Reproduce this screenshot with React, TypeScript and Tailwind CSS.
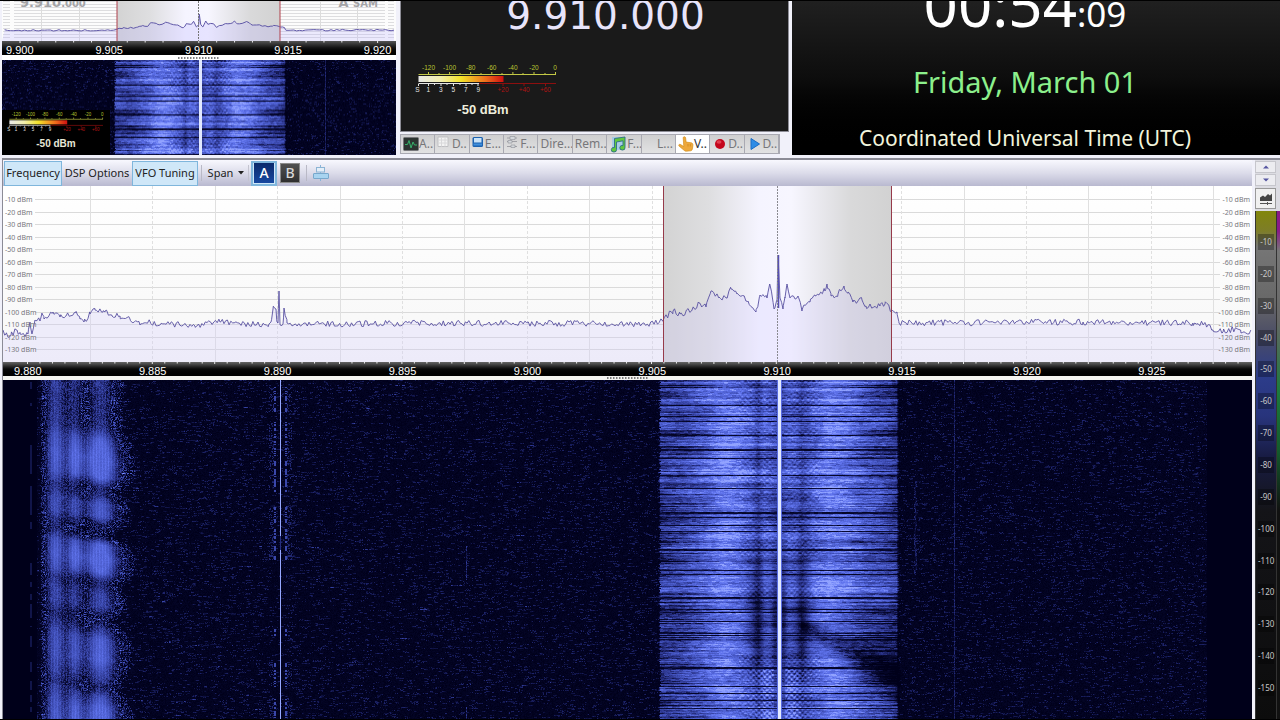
import { useEffect, useRef } from "react";
import type { ReactNode } from "react";
import clsx from "clsx";

/* ---------- deterministic noise ---------- */

function hash(x: number, y: number, seed = 0): number {
  let h = (x * 374761393 + y * 668265263 + seed * 2147483629) | 0;
  h = Math.imul(h ^ (h >>> 13), 1274126177);
  h = Math.imul(h ^ (h >>> 16), 2246822519);
  return ((h ^ (h >>> 15)) >>> 0) / 4294967296;
}

function smooth(x: number, seed: number): number {
  const i = Math.floor(x);
  const f = x - i;
  const t = f * f * (3 - 2 * f);
  return hash(i, 7, seed) * (1 - t) + hash(i + 1, 7, seed) * t;
}

function smooth2(x: number, y: number, seed: number): number {
  const i = Math.floor(x);
  const j = Math.floor(y);
  const u = x - i;
  const v = y - j;
  const a = hash(i, j, seed) * (1 - u) + hash(i + 1, j, seed) * u;
  const b = hash(i, j + 1, seed) * (1 - u) + hash(i + 1, j + 1, seed) * u;
  return a * (1 - v) + b * v;
}

const gauss = (d: number, w: number) => Math.exp(-(d * d) / (w * w));

function curve(points: number[][], x: number): number {
  if (x <= points[0][0]) return points[0][1];
  for (let i = 1; i < points.length; i++) {
    if (x <= points[i][0]) {
      const [x0, y0] = points[i - 1];
      const [x1, y1] = points[i];
      return y0 + ((y1 - y0) * (x - x0)) / (x1 - x0);
    }
  }
  return points[points.length - 1][1];
}

/* ---------- spectrum trace ---------- */

const TRACE: number[][] = [
  [0, 144], [3, 148], [8, 149], [14, 144], [17, 148], [25, 148], [27, 136], [29, 148], [32, 134], [37, 135],
  [39, 127], [41, 133], [50, 126], [57, 131], [63, 130], [72, 127], [77, 133], [81, 136], [87, 128], [92, 124],
  [100, 126], [103, 124], [109, 130], [117, 130], [127, 133], [137, 139], [145, 136], [157, 139], [167, 138],
  [192, 140], [217, 136], [237, 138], [266, 138], [268, 136], [270, 123], [273, 123], [274, 136], [275, 137],
  [276, 105], [277, 138], [280, 138], [281, 122], [284, 137], [300, 138], [450, 137], [651, 138], [659, 134],
  [670, 125], [677, 128], [689, 124], [696, 117], [703, 121], [708, 105], [716, 111], [723, 112], [728, 103],
  [734, 108], [745, 115], [753, 126], [757, 109], [764, 112], [767, 99], [771, 123], [774, 114], [775, 69],
  [777, 112], [780, 123], [782, 111], [784, 98], [787, 112], [795, 110], [799, 125], [802, 119], [807, 116],
  [812, 109], [822, 105], [824, 98], [828, 110], [835, 108], [841, 100], [845, 106], [850, 116], [859, 114],
  [863, 120], [877, 120], [882, 118], [889, 124], [894, 126], [896, 137], [1080, 136], [1190, 137],
  [1203, 139], [1210, 144], [1220, 146], [1230, 143], [1238, 147], [1249, 147],
];

function tracePath(from: number, to: number, step: number, mapX: (x: number) => number, mapY: (y: number) => number) {
  const keys = TRACE.map((p) => p[0]);
  const xs: number[] = [];
  for (let x = from; x <= to; x += step) xs.push(x);
  keys.forEach((k) => k > from && k < to && xs.push(k));
  xs.sort((a, b) => a - b);
  return xs
    .map((x) => {
      const noise = keys.includes(x) ? 0 : (hash(Math.round(x * 3), 5) - 0.5) * 6;
      return `${mapX(x).toFixed(1)} ${mapY(curve(TRACE, x) + noise).toFixed(1)}`;
    })
    .join("L");
}

/* ---------- waterfall ---------- */

const PASS: number[][] = [
  [657, 0], [660, 0.46], [680, 0.54], [700, 0.68], [722, 0.82], [740, 0.76], [752, 0.64], [758, 0.5], [764, 0.68],
  [772, 0.6], [779, 0.5], [788, 0.66], [796, 0.64], [801, 0.5], [812, 0.68], [828, 0.82], [848, 0.78], [864, 0.64],
  [885, 0.54], [896, 0.46], [899, 0],
];
const DARK_ROWS = [
  25, 36, 41, 55, 69, 70, 78, 95, 108, 132, 133, 137, 145, 151, 169, 170, 190, 194, 217, 218, 229, 232, 241, 253, 255, 287, 288, 306,
  313, 320, 328,
];
const BLOBS: number[][] = [
  [0, 0.5], [20, 0.46], [42, 0.46], [55, 0.78], [75, 0.95], [92, 0.86], [104, 0.4], [110, 0.45], [120, 0.72], [132, 0.72],
  [144, 0.22], [150, 0.2], [160, 0.8], [175, 0.95], [188, 0.8], [198, 0.4], [210, 0.6], [222, 0.6], [234, 0.22],
  [244, 0.5], [255, 0.76], [275, 0.8], [292, 0.6], [303, 0.38], [312, 0.66], [325, 0.85], [340, 0.9],
];
const RAMP: number[][] = [
  [0, 0, 0, 26], [0.2, 8, 10, 50], [0.4, 38, 46, 128], [0.6, 66, 82, 188], [0.8, 96, 116, 238], [0.95, 140, 158, 255], [1.1, 225, 232, 255],
];

function level(x: number, y: number): number {
  const streak = hash(Math.floor((x + hash(1, y) * 5) / 4), y, 3);
  const fine = hash(Math.floor(x), y, 4);

  if (x > 776.6 && x < 781.6) return x > 777.6 && x < 780.6 ? 1.1 : 0.75;

  const edge = (hash(3, y, 9) - 0.5) * 3;
  if (x > 659 + edge && x < 899 + edge) {
    let v = curve(PASS, x);
    const side = Math.abs(x - 779);
    v += (smooth(y / 2.2, 11) - 0.5) * 0.2 + (hash(2, y, 12) - 0.5) * 0.2;
    v += (streak - 0.5) * 0.22 + (fine - 0.5) * 0.08;
    v += (smooth2(x / 22, y / 7, 14) - 0.5) * 0.26;
    if (side > 50 && hash(5, y, 13) > 0.78) v -= 0.22 * Math.min(1, (side - 50) / 30);
    if (Math.abs(x - 724) < 2) v = Math.max(v, 0.7);
    const dim = gauss(y - 235, 55);
    v -= dim * (gauss(side - 22, 9) * 0.3 + gauss(side - 4, 4) * 0.3) * (0.6 + streak * 0.6);
    if (side < 42 && side > 5) {
      const ripple = Math.sin(side * 1.15) * Math.sin(y * 1.2 + Math.floor(side / 8));
      v += ripple * 0.13 * smooth(y / 9, 20);
      if (y > 288) v += gauss(side - 12, 18) * (0.1 + ripple * 0.2);
    }
    if (x > 800) {
      const mid = 244 + (x - 800) * 0.5;
      const width = 5 + (x - 800) * 0.2;
      v -= gauss(y - mid, width) * (0.2 + Math.min(0.24, (x - 800) * 0.006));
    }
    v = Math.min(v, 0.96);
    if (DARK_ROWS.includes(y)) v = Math.min(v, 0.06 + streak * 0.22);
    return Math.max(0, v);
  }

  let v = 0;
  if (x > 32 && x < 150) {
    const lag = y - (x - 70) * 0.14;
    const b = curve(BLOBS, lag);
    const columns =
      gauss(x - 55, 11) * 0.7 * (0.4 + b * 0.6) +
      gauss(x - 74, 8) * 0.6 * (0.2 + b * 0.8) +
      gauss(x - 100, 9 + b * 12) * 0.9 * b;
    v = Math.min(0.72, columns);
    if (x < 41) v *= 0.25;
    const grain = 0.08 + Math.max(0, 0.62 - v) * 0.8;
    v += v > 0.04 ? (fine - 0.5) * grain + (Math.floor(x) % 3 === 0 ? 0.05 : -0.02) : 0;
    v = Math.max(0, v);
    if (columns > 0.25) return v;
  }

  const side = Math.abs(x - 280);
  if (side < 0.9) return y > 155 && y < 170 ? 0.4 : 0.97;
  const burst = smooth(y / 12, 31) > 0.36;
  if (burst && side >= 4.5 && side < 6.6) return Math.max(v, hash(9, y, 6) > 0.45 ? 0.54 : 0.1);
  if (burst && side > 6.6 && side < 12 && hash(Math.floor(side), y, 7) > 0.82) return 0.36;
  if (Math.abs(x - 954) < 0.8) return 0.22 + fine * 0.2;
  if (Math.abs(x - 466) < 1 && ((y > 165 && y < 200) || y > 326)) return 0.2 + fine * 0.3;
  if (Math.abs(x - 914 - smooth(y / 6, 40) * 2) < 1 && y > 100 && y < 195) return 0.1 + fine * 0.3;
  if (Math.abs(x - 30.5) < 0.7 && smooth(y / 6, 41) > 0.6) return 0.26;

  if (x > 36 && x < 1207) {
    if (streak < 0.2 && fine > 0.3) v += 0.12 + hash(Math.floor(x), y, 8) * 0.15;
    if (x < 560) {
      const dash = hash(Math.floor(x / 11), y, 17);
      const reach = x < 240 ? 0.978 : 0.99;
      if (dash > reach && fine > 0.3) v += 0.18;
    }
    v += fine * 0.1;
  }
  return v;
}

function Waterfall({ width, height, mapX, className, label }: {
  width: number;
  height: number;
  mapX: (x: number) => number;
  className: string;
  label: string;
}) {
  const ref = useRef<HTMLCanvasElement>(null);
  useEffect(() => {
    const ctx = ref.current?.getContext("2d");
    if (!ctx) return;
    const image = ctx.createImageData(width, height);
    for (let y = 0; y < height; y++) {
      for (let x = 0; x < width; x++) {
        const v = Math.min(1.1, level(mapX(x), y));
        let k = 1;
        while (k < RAMP.length - 1 && v > RAMP[k][0]) k++;
        const a = RAMP[k - 1];
        const b = RAMP[k];
        const t = (v - a[0]) / (b[0] - a[0]);
        const o = (y * width + x) * 4;
        image.data[o] = a[1] + (b[1] - a[1]) * t;
        image.data[o + 1] = a[2] + (b[2] - a[2]) * t;
        image.data[o + 2] = a[3] + (b[3] - a[3]) * t;
        image.data[o + 3] = 255;
      }
    }
    ctx.putImageData(image, 0, 0);
  }, [width, height, mapX]);
  return <canvas ref={ref} width={width} height={height} className={className} role="img" aria-label={label} />;
}

const mainScale = (x: number) => x + 3;
const zoomScale = (x: number) => 779 + (x - 198) * 1.397;

/* ---------- signal meter ---------- */

const UPPER = ["-120", "-100", "-80", "-60", "-40", "-20", "0"];
const LOWER = ["S", "1", "3", "5", "7", "9"];
const OVER = ["+20", "+40", "+60"];

function Meter({ id, className }: { id: string; className: string }) {
  return (
    <svg viewBox="0 0 144 31" className={className} role="img" aria-label="Signal strength">
      <defs>
        <linearGradient id={id}>
          <stop offset="0" stopColor="#e8e8e8" />
          <stop offset="0.25" stopColor="#f1eeb0" />
          <stop offset="0.5" stopColor="#f3e22a" />
          <stop offset="0.8" stopColor="#ef6a1c" />
          <stop offset="1" stopColor="#d01010" />
        </linearGradient>
      </defs>
      <g fontFamily="Liberation Sans, sans-serif" fontSize="6.500" textAnchor="middle">
        {UPPER.map((t, i) => (
          <text key={t} x={13.5 + i * 21.1} y={6.5} fill="#b9c432">{t}</text>
        ))}
        {LOWER.map((t, i) => (
          <text key={t} x={i === 0 ? 2.5 : 0.7 + i * 12.5} y={28.5} fill="#e6e6e6">{t}</text>
        ))}
        {OVER.map((t, i) => (
          <text key={t} x={88 + i * 21.2} y={28.5} fill="#b01414">{t}</text>
        ))}
      </g>
      <path
        d="M3.500 11.500H141M13.500 9v2M34.600 9v2M55.700 9v2M76.800 9v2M97.900 9v2M119 9v2M140.500 9v2M24 10v1M45 10v1M66 10v1M87 10v1M108 10v1M130 10v1"
        stroke="#c3c845"
        fill="none"
      />
      <rect x="3.500" y="13" width="85" height="6" fill={`url(#${id})`} />
      <path d="M3.500 20.500H64M3.500 21v2M13.500 21v2M19.500 21v1M26 21v2M32 21v1M38.500 21v2M45 21v1M51 21v2M57 21v1M63 21v2" stroke="#e6e6e6" fill="none" />
      <path d="M64 20.500H141M88 21v2M109 21v2M130.500 21v2" stroke="#8d0f0f" fill="none" />
    </svg>
  );
}

/* ---------- charts ---------- */

const LEVELS = Array.from({ length: 13 }, (_, i) => -10 * (i + 1));
const MAIN_TRACE = tracePath(0, 1249, 1.7, (x) => x, (y) => y);
const ZOOM_TRACE = tracePath(503, 1050, 4, (x) => 198 + (x + 3 - 779) / 1.397, (y) => y * 0.235 - 3);

function BandGradient({ id }: { id: string }) {
  return (
    <linearGradient id={id}>
      <stop offset="0" stopColor="#d3d3d3" />
      <stop offset="0.2" stopColor="#dedee0" />
      <stop offset="0.42" stopColor="#f5f4ff" />
      <stop offset="0.56" stopColor="#f7f6ff" />
      <stop offset="0.82" stopColor="#d9d9da" />
      <stop offset="1" stopColor="#d2d2d2" />
    </linearGradient>
  );
}

function MainChart() {
  return (
    <svg viewBox="0 0 1249 176" preserveAspectRatio="none" className="block h-full w-full" role="img" aria-label="RF spectrum">
      <defs>
        <BandGradient id="band-main" />
        <linearGradient id="paper" x2="0" y2="1">
          <stop offset="0" stopColor="#ffffff" />
          <stop offset="1" stopColor="#f7f7f7" />
        </linearGradient>
      </defs>
      <rect width="1249" height="176" fill="url(#paper)" />
      {LEVELS.map((l, i) => (
        <path key={l} d={`M32 ${Math.round(13 + i * 12.53) + 0.5}H1217`} stroke="#dadada" />
      ))}
      {Array.from({ length: 19 }, (_, i) => (
        <path
          key={i}
          d={`M${Math.round(87 + i * 62.4) + 0.5} 0V176`}
          stroke="#e0e0e0"
          strokeDasharray={i % 2 ? "3 2" : undefined}
        />
      ))}
      <rect x="660" y="0" width="229" height="176" fill="url(#band-main)" />
      <path d={`M${MAIN_TRACE}V176H0Z`} fill="#cfc8ff" fillOpacity="0.26" />
      <path d={`M${MAIN_TRACE}`} fill="none" stroke="#5850a0" strokeWidth="0.900" />
      <path d="M775.500 69V122" stroke="#5850b0" strokeWidth="1.500" />
      <path d="M660.500 0V176M888.500 0V176" stroke="#963a4a" />
      <path d="M774.500 0V176" stroke="#8a8a90" strokeDasharray="2 1" />
    </svg>
  );
}

function ZoomChart() {
  return (
    <svg viewBox="0 0 394 40" preserveAspectRatio="none" className="block h-full w-full" role="img" aria-label="Zoomed spectrum">
      <defs>
        <BandGradient id="band-zoom" />
      </defs>
      <rect width="394" height="40" fill="#fcfcfc" />
      {Array.from({ length: 13 }, (_, i) => (
        <path key={i} d={`M12 ${i * 3 + 0.5}H383M1 ${i * 3 + 0.5}h7M386 ${i * 3 + 0.5}h6`} stroke="#dddddf" />
      ))}
      <path d="M39.500 0V40M77.500 0V40M318.500 0V40M355.500 0V40" stroke="#dcdcdc" />
      <rect x="115" y="0" width="163" height="40" fill="url(#band-zoom)" />
      <path d={`M${ZOOM_TRACE}V40H0Z`} fill="#b9b0ff" fillOpacity="0.25" />
      <path d={`M${ZOOM_TRACE}`} fill="none" stroke="#6058a8" />
      <path d="M115 0V40M278 0V40" stroke="#b0404c" />
      <path d="M196.500 0V40" stroke="#777" strokeDasharray="2 1" />
    </svg>
  );
}

function Ticks({ start, step, count, width }: { start: number; step: number; count: number; width: number }) {
  return (
    <svg viewBox={`0 0 ${width} 3`} preserveAspectRatio="none" className="absolute inset-x-0 top-0 h-[3px] w-full" aria-hidden="true">
      {Array.from({ length: count }, (_, i) => (
        <path key={i} d={`M${start + i * step} 0v${i % 5 ? 1.5 : 2}`} stroke="#e8e8e8" />
      ))}
    </svg>
  );
}

function LevelLabels({ side }: { side: "left" | "right" }) {
  return (
    <div
      className={clsx(
        "absolute inset-y-0 flex flex-col justify-between pt-[8px] pb-[6px] font-['Noto_Sans',sans-serif] text-[7px] leading-[12px] text-[#77777c]",
        side === "left" ? "left-[2px]" : "right-[2px] text-right",
      )}
    >
      {LEVELS.map((l) => (
        <span key={l}>{l} dBm</span>
      ))}
    </div>
  );
}

const Grip = () => (
  <svg viewBox="0 0 42 2" className="h-[2px] w-[42px]" aria-hidden="true">
    <path d="M0 1H42" stroke="#555" strokeWidth="1.500" strokeDasharray="1.500 1.500" />
  </svg>
);

/* ---------- tab icons ---------- */

const ScopeIcon = () => (
  <svg viewBox="0 0 16 16" className="size-4 shrink-0" aria-hidden="true">
    <rect x="0.500" y="1.500" width="15" height="13" rx="1" fill="#2c3431" stroke="#77777b" />
    <path d="M2 8.500h2.500l1.500-4 2 7.500 2-6 1.500 3H14" fill="none" stroke="#37b06a" />
  </svg>
);
const GridIcon = () => (
  <svg viewBox="0 0 12 12" className="mb-1 size-3 shrink-0" aria-hidden="true">
    <path d="M1 1h10v9.500H1z" fill="#f3f3f3" stroke="#bfbfc2" />
    <path d="M1 4h10M1 7h10M4.500 1v9.500M8 1v9.500" stroke="#d8d8da" />
  </svg>
);
const WindowIcon = () => (
  <svg viewBox="0 0 12 12" className="mb-1 size-3 shrink-0" aria-hidden="true">
    <rect x="0.500" y="1" width="10.500" height="10" rx="1.500" fill="#1c62b0" />
    <rect x="2" y="2" width="7.500" height="4.500" fill="#c8e2f8" />
    <path d="M1.500 8.500H10" stroke="#3f8fdc" strokeWidth="2" />
  </svg>
);
const FilterIcon = () => (
  <svg viewBox="0 0 12 12" className="mb-1 size-3 shrink-0" aria-hidden="true">
    <path d="M1 2h10M1 5.500h10M1 10.500h10" stroke="#a0a0a6" />
    <path d="M4 .5h5v3H4zM2 4.500h4v2.500H2zM5 9h4v2.500H5z" fill="#d4d8dc" stroke="#8d9198" strokeWidth="0.600" />
  </svg>
);
const MusicIcon = () => (
  <svg viewBox="0 0 18 17" className="h-[17px] w-[18px] shrink-0" aria-hidden="true">
    <rect x="3" y="1" width="12" height="13" fill="#9cc8ea" opacity="0.800" />
    <path d="M5.500 2.500 16 1v10.500a2.600 2.300 0 1 1-2-2V4.800L7.500 6v7.500a2.600 2.300 0 1 1-2-2z" fill="#62c83e" stroke="#2b6e86" strokeWidth="0.900" />
  </svg>
);
const HandIcon = () => (
  <svg viewBox="0 0 16 16" className="size-4 shrink-0" aria-hidden="true">
    <path
      d="M5.200 1.800c0-1.400 2.200-1.400 2.400 0l.5 4.300 4.800.6c1.500.3 2.100 1.100 2 2.600l-.5 3.600c-.2 1-.8 1.700-1.800 1.900l-4.200.4c-1 .1-1.700-.2-2.300-.9L1 10c-.8-1.200.5-2.200 1.600-1.400l3.200 2z"
      fill="#eda83c"
      stroke="#d68f1c"
      strokeWidth="0.700"
    />
    <path d="M10 8v2.500M12.300 8v2.500" stroke="#c98317" strokeWidth="0.700" />
  </svg>
);
const RecordIcon = () => (
  <svg viewBox="0 0 16 16" className="size-4 shrink-0" aria-hidden="true">
    <circle cx="8" cy="8" r="5" fill="#c4061c" />
    <ellipse cx="7" cy="6" rx="2.500" ry="1.700" fill="#ee5a66" opacity="0.700" />
  </svg>
);
const PlayIcon = () => (
  <svg viewBox="0 0 16 16" className="size-4 shrink-0" aria-hidden="true">
    <path d="M4 2.500v11L12.500 8z" fill="#2e8ce6" stroke="#1a6cc4" />
  </svg>
);

const TABS: { text: string; icon?: ReactNode; active?: boolean; end?: boolean }[] = [
  { text: "A..", icon: <ScopeIcon /> },
  { text: "D..", icon: <GridIcon />, end: true },
  { text: "E...", icon: <WindowIcon />, end: true },
  { text: "F...", icon: <FilterIcon />, end: true },
  { text: "Dire..." },
  { text: "Rem..." },
  { text: "F...", icon: <MusicIcon /> },
  { text: "L...", end: true },
  { text: "V..", icon: <HandIcon />, active: true },
  { text: "D..", icon: <RecordIcon />, end: true },
  { text: "D..", icon: <PlayIcon />, end: true },
];

/* ---------- panels ---------- */

function ZoomPanel() {
  return (
    <section className="flex w-[394px] shrink-0 flex-col">
      <div className="relative h-10 overflow-hidden">
        <ZoomChart />
        <div className="absolute inset-x-[18px] -top-[6px] flex justify-between font-['DejaVu_Sans',sans-serif] leading-4 font-bold text-[#a3a3a6]">
          <p className="text-[13px]">
            9.910<span className="text-[10px]">.000</span>
          </p>
          <p className="text-[13px]">
            A <span className="text-[10px]">SAM</span>
          </p>
        </div>
      </div>
      <div className="relative flex h-[14px] overflow-hidden bg-gradient-to-b from-[#555] via-[#111] to-black pt-[3px] font-['Liberation_Sans',sans-serif] text-[11px] leading-[12px] text-white">
        <Ticks start={18} step={17.88} count={21} width={394} />
        {["9.900", "9.905", "9.910", "9.915", "9.920"].map((f) => (
          <span key={f} className="w-[22.7%] shrink-0 pl-[4px]">{f}</span>
        ))}
      </div>
      <div className="flex h-[5px] items-center justify-center bg-white">
        <Grip />
      </div>
      <div className="relative min-h-0 flex-1">
        <Waterfall width={394} height={96} mapX={zoomScale} className="block h-full w-full" label="Zoomed waterfall" />
        <div className="absolute bottom-0 left-0 flex w-[108px] flex-col items-center bg-black pt-px pb-1">
          <Meter id="meter-small" className="h-[22px] w-[98px]" />
          <p className="mt-1 font-['Liberation_Sans',sans-serif] text-[10px] leading-[14px] font-bold text-[#e8e8d8]">-50 dBm</p>
        </div>
      </div>
    </section>
  );
}

function VfoPanel() {
  return (
    <section className="flex w-[389px] shrink-0 flex-col">
      <div className="flex h-[131px] flex-col justify-end border-x border-b border-[#8d8d96] bg-[#1a1a1a]">
        <p className="pl-[22px] text-center font-['DejaVu_Sans',sans-serif] text-[39px] leading-[46px] text-[#e8e4fa]">9.910.000</p>
        <div className="mt-6 ml-[14px] flex w-[144px] flex-col items-center">
          <Meter id="meter-large" className="h-[31px] w-[144px]" />
          <p className="mt-2 mr-2 mb-[13px] font-['Liberation_Sans',sans-serif] text-[13px] leading-4 font-bold text-[#eeeedd]">-50 dBm</p>
        </div>
      </div>
      <div className="mt-[2px] flex h-[20px] w-[380px] border border-[#a9a9b2]" role="tablist">
        {TABS.map((t, i) => (
          <button
            key={i}
            type="button"
            role="tab"
            aria-selected={!!t.active}
            className={clsx(
              "flex min-w-0 flex-1 items-center overflow-hidden border-r border-[#a9a9b2] px-[2px] font-['Noto_Sans',sans-serif] text-[12px] leading-4 whitespace-nowrap",
              t.active ? "bg-white text-[#333]" : "bg-gradient-to-b from-[#cfcfd0] to-[#e2e2e3] text-[#77777a]",
              t.icon && t.end ? "justify-between" : t.end ? "justify-end" : "justify-start",
            )}
          >
            {t.icon}
            <span>{t.text}</span>
          </button>
        ))}
      </div>
    </section>
  );
}

function ClockPanel() {
  return (
    <section className="flex min-w-0 flex-1 flex-col items-center justify-end overflow-hidden bg-gradient-to-b from-[#202020] via-[#0d0d0d] to-black pr-[22px] font-['Noto_Sans',sans-serif] whitespace-nowrap">
      <p className="text-[60px] leading-[60px] text-white">
        00:54<span className="text-[35px]">:09</span>
      </p>
      <p className="mt-5 text-[29px] leading-9 text-[#8cf08c]">Friday, March 01</p>
      <p className="mt-6 mb-[3px] text-[21px] leading-7 text-[#f2f4dc]">Coordinated Universal Time (UTC)</p>
    </section>
  );
}

const TOOL = "flex h-[25px] items-center justify-center border text-[11px] whitespace-nowrap text-[#222]";
const ON = "border-[#7fb6dc] bg-[#cfe7f8]";
const Divider = () => <span className="mx-[3px] h-4 w-px bg-[#b9b9c6]" />;

function Toolbar() {
  return (
    <div
      role="toolbar"
      className="flex h-[26px] shrink-0 items-center bg-gradient-to-b from-[#f8f8fe] via-[#dcdcea] to-[#b9b9d0] pl-px font-['Noto_Sans',sans-serif]"
    >
      <button type="button" className={clsx(TOOL, ON, "w-[58px]")}>Frequency</button>
      <button type="button" className={clsx(TOOL, "w-[70px] border-transparent")}>DSP Options</button>
      <button type="button" className={clsx(TOOL, ON, "w-[66px]")}>VFO Tuning</button>
      <Divider />
      <button type="button" className={clsx(TOOL, "w-[42px] gap-[5px] border-transparent")}>
        Span
        <svg viewBox="0 0 6 4" className="h-1 w-[6px] shrink-0" aria-hidden="true">
          <path d="M0 0h6L3 3.500z" fill="#222" />
        </svg>
      </button>
      <span className="mr-[2px] ml-px h-4 w-px bg-[#c4c4d0]" />
      <button type="button" className="flex h-[25px] w-[26px] items-center justify-center border-2 border-[#7fb6dc] bg-[#cfe7f8]">
        <span className="flex size-5 items-center justify-center bg-gradient-to-b from-[#0b2a6c] to-[#1748a0] text-[14px] leading-5 font-medium text-white">A</span>
      </button>
      <button type="button" className="flex h-[25px] w-[26px] items-center justify-center">
        <span className="flex size-5 items-center justify-center border border-[#8a8a8a] bg-gradient-to-b from-[#505050] to-[#303030] text-[14px] leading-5 font-medium text-[#d8d8d8]">B</span>
      </button>
      <Divider />
      <button type="button" aria-label="Layout" className="ml-[3px] flex size-4 items-center justify-center">
        <svg viewBox="0 0 16 16" className="size-4" aria-hidden="true">
          <path d="M7.500 0v3M7.500 7v2M7.500 14v2" stroke="#88b4d8" />
          <rect x="3.500" y="2.500" width="8" height="4.500" fill="#e4eef8" stroke="#8cb4d4" />
          <rect x="0.500" y="8.500" width="15" height="5" rx="0.500" fill="#a8d4f0" stroke="#78a8cc" />
        </svg>
      </button>
    </div>
  );
}

function SpinButton({ up }: { up?: boolean }) {
  return (
    <button
      type="button"
      aria-label={up ? "Raise level" : "Lower level"}
      className="flex h-3 w-[21px] items-center justify-center border border-[#c6c6cc] bg-[#ececf0]"
    >
      <svg viewBox="0 0 6 4" className="h-1 w-[6px]" aria-hidden="true">
        <path d={up ? "M0 3.500h6L3 .5z" : "M0 .5h6L3 3.500z"} fill="#5555a0" />
      </svg>
    </button>
  );
}

function LevelStrip() {
  return (
    <aside className="ml-[3px] flex w-[25px] shrink-0 flex-col bg-[#dcdce2]">
      <div className="flex flex-col items-start gap-px pt-px">
        <SpinButton up />
        <SpinButton />
      </div>
      <div className="flex h-[25px] items-center">
        <button type="button" aria-label="Waterfall colours" className="flex size-[21px] items-center justify-center border border-[#999] bg-[#f0f0f0]">
          <svg viewBox="0 0 14 12" className="h-3 w-[14px]" aria-hidden="true">
            <path d="M1 4.500l3-2 2 1.500L9 1 11 2.500l2-2V8H1z" fill="#444" />
            <path d="M1 10.500h12M8.500 9v3" stroke="#555" />
          </svg>
        </button>
      </div>
      <div className="flex min-h-0 flex-1">
        <ul className="flex w-[22px] flex-col items-center overflow-hidden border-x border-[#333] bg-[linear-gradient(to_bottom,#82860c_0px,#7d7d28_20px,#767676_36px,#686868_90px,#4a4c66_125px,#2c3c8a_165px,#28347c_205px,#181c44_245px,#141418_300px,#0c0c0c_510px)] pt-[23px] pb-[7px] font-['Noto_Sans',sans-serif] text-[8px] text-[#c8c8c8]">
          {Array.from({ length: 15 }, (_, i) => (
            <li key={i} className="flex min-h-4 w-full flex-1 items-start justify-center">
              <span className="w-4 bg-black/30 text-center leading-4">{-10 * (i + 1)}</span>
            </li>
          ))}
        </ul>
        <div className="flex-1 bg-[linear-gradient(to_bottom,#8a1a88_0px,#8a1a88_20px,#777_40px,#666_110px,#1c7a3c_180px,#145a2c_240px,#111_300px)]" />
      </div>
    </aside>
  );
}

export default function App() {
  return (
    <main className="flex h-screen flex-col overflow-hidden border-y border-black bg-[#f1f1fa]">
      <div className="flex h-[154px] shrink-0 overflow-hidden pl-[2px]">
        <ZoomPanel />
        <div className="w-1 shrink-0" />
        <VfoPanel />
        <div className="w-[3px] shrink-0" />
        <ClockPanel />
      </div>
      <div className="mt-[3px] ml-[2px] flex min-h-0 flex-1 border-t-2 border-l border-[#8b8b96]">
        <section className="flex min-w-0 flex-1 flex-col">
          <Toolbar />
          <div className="relative h-44 shrink-0">
            <MainChart />
            <LevelLabels side="left" />
            <LevelLabels side="right" />
          </div>
          <div className="relative flex h-[14px] shrink-0 overflow-hidden bg-gradient-to-b from-[#666] via-[#0a0a0a] to-black pt-[3px] font-['Liberation_Sans',sans-serif] text-[11px] leading-[12px] text-white">
            <Ticks start={24.5} step={12.48} count={98} width={1249} />
            {["9.880", "9.885", "9.890", "9.895", "9.900", "9.905", "9.910", "9.915", "9.920", "9.925"].map((f) => (
              <span key={f} className="flex-1 pl-[11px]">{f}</span>
            ))}
          </div>
          <div className="flex h-1 shrink-0 items-center justify-center bg-[#f4f4f0]">
            <Grip />
          </div>
          <div className="min-h-0 flex-1">
            <Waterfall width={1249} height={339} mapX={mainScale} className="block h-full w-full" label="Waterfall" />
          </div>
        </section>
        <LevelStrip />
      </div>
    </main>
  );
}
